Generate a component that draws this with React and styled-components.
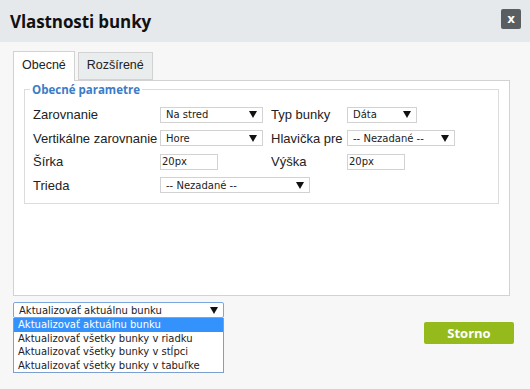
import React from 'react';
import styled, { createGlobalStyle } from 'styled-components';

const GlobalStyle = createGlobalStyle`
  html, body {
    margin: 0;
    padding: 0;
    background: #f7f7f7;
  }
  body {
    width: 530px;
    height: 389px;
    overflow: hidden;
    font-family: "Liberation Sans", Arial, sans-serif;
  }
`;

const Dialog = styled.div`
  width: 530px;
  height: 389px;
  display: flex;
  flex-direction: column;
  background: #f7f7f7;
`;

const Header = styled.div`
  height: 42px;
  flex: none;
  display: flex;
  align-items: center;
  justify-content: space-between;
  padding: 0 9px 0 10px;
  background: #e6e9ec;
  box-sizing: border-box;
`;

const Title = styled.h1`
  margin: 0;
  font-family: "Open Sans", sans-serif;
  font-weight: 700;
  font-size: 17px;
  color: #111;
  letter-spacing: -0.1px;
`;

const CloseButton = styled.button`
  width: 20px;
  height: 20px;
  margin-top: -4px;
  padding: 0;
  border: none;
  border-radius: 2px;
  background: #595e63;
  color: #fff;
  font-family: "DejaVu Sans", sans-serif;
  font-weight: 700;
  font-size: 12px;
  line-height: 20px;
`;

const Body = styled.div`
  padding: 9px 15px 0 13px;
  margin-right: 5px;
`;

const Tabs = styled.div`
  display: flex;
  align-items: flex-end;
  gap: 3px;
`;

const Tab = styled.div`
  box-sizing: border-box;
  height: ${p => (p.$active ? '30px' : '28px')};
  margin-bottom: ${p => (p.$active ? '-1px' : '0')};
  padding: 0 8px;
  border: 1px solid #d2d2d2;
  border-bottom: ${p => (p.$active ? 'none' : '1px solid #d2d2d2')};
  background: ${p => (p.$active ? '#fff' : '#eaedee')};
  font-size: 12.5px;
  line-height: ${p => (p.$active ? '27px' : '25px')};
  color: #222;
  position: relative;
  z-index: ${p => (p.$active ? 1 : 0)};
`;

const Panel = styled.div`
  box-sizing: border-box;
  height: 216px;
  background: #fff;
  border: 1px solid #d2d2d2;
  padding: 1px 10px 0 10px;
`;

const Fieldset = styled.fieldset`
  margin: 0;
  padding: 6px 8px 6px 8px;
  border: 1px solid #dcdcdc;
`;

const Legend = styled.legend`
  padding: 0 2px;
  margin-left: -3px;
  font-family: "Open Sans", sans-serif;
  font-weight: 700;
  font-size: 11.5px;
  color: #3b7bc8;
`;

const FormGrid = styled.div`
  display: grid;
  grid-template-columns: 127px 111px 76px 1fr;
  grid-auto-rows: 23.5px;
  align-items: center;
`;

const Label = styled.span`
  font-size: 13px;
  color: #222;
  white-space: nowrap;
`;

const Control = styled.div`
  box-sizing: border-box;
  width: ${p => p.$width}px;
  height: 16px;
  display: flex;
  align-items: center;
  justify-content: space-between;
  padding: 0 5px 0 ${p => (p.$input ? 1 : 5)}px;
  border: 1px solid ${p => (p.$focus ? '#7ba7df' : '#d2d2d2')};
  border-radius: ${p => (p.$focus ? '2px' : '0')};
  background: #fff;
  font-family: "DejaVu Sans", Verdana, sans-serif;
  font-size: 10px;
  color: #222;
  white-space: nowrap;
`;

const Arrow = () => (
  <svg width="8" height="7" viewBox="0 0 8 7">
    <path d="M0 0 H8 L4 7 Z" fill="#111" />
  </svg>
);

const Select = ({ width, value, focus }) => (
  <Control $width={width} $focus={focus}>
    <span>{value}</span>
    <Arrow />
  </Control>
);

const Input = ({ width, value }) => (
  <Control $width={width} $input>
    <span>{value}</span>
  </Control>
);

const Footer = styled.div`
  display: flex;
  justify-content: space-between;
  align-items: flex-start;
  padding: 6px 16px 0 13px;
`;

const Picker = styled.div`
  display: flex;
  flex-direction: column;
  width: 211px;
`;

const OptionList = styled.ul`
  list-style: none;
  margin: 0;
  padding: 0;
  border: 1px solid #7b9fd0;
  border-top: none;
  background: #fff;
`;

const Option = styled.li`
  height: 13.5px;
  line-height: 13.5px;
  padding-left: 4px;
  font-family: "DejaVu Sans", Verdana, sans-serif;
  font-size: 10px;
  background: ${p => (p.$selected ? '#3492fd' : '#fff')};
  color: ${p => (p.$selected ? '#fff' : '#222')};
  white-space: nowrap;
`;

const PrimaryButton = styled.button`
  margin-top: 20px;
  width: 90px;
  height: 22px;
  border: none;
  border-radius: 2px;
  background: #94ba1c;
  color: #fff;
  font-family: "Open Sans", sans-serif;
  font-weight: 700;
  font-size: 13px;
  padding: 0;
`;

const options = [
  'Aktualizovať aktuálnu bunku',
  'Aktualizovať všetky bunky v riadku',
  'Aktualizovať všetky bunky v stĺpci',
  'Aktualizovať všetky bunky v tabuľke',
];

export default function App() {
  return (
    <>
      <GlobalStyle />
      <Dialog>
        <Header>
          <Title>Vlastnosti bunky</Title>
          <CloseButton>x</CloseButton>
        </Header>
        <Body>
          <Tabs>
            <Tab $active>Obecné</Tab>
            <Tab>Rozšírené</Tab>
          </Tabs>
          <Panel>
            <Fieldset>
              <Legend>Obecné parametre</Legend>
              <FormGrid>
                <Label>Zarovnanie</Label>
                <Select width={103} value="Na stred" />
                <Label>Typ bunky</Label>
                <Select width={70} value="Dáta" />

                <Label>Vertikálne zarovnanie</Label>
                <Select width={103} value="Hore" />
                <Label>Hlavička pre</Label>
                <Select width={108} value="-- Nezadané --" />

                <Label>Šírka</Label>
                <Input width={58} value="20px" />
                <Label>Výška</Label>
                <Input width={58} value="20px" />

                <Label>Trieda</Label>
                <Select width={150} value="-- Nezadané --" />
              </FormGrid>
            </Fieldset>
          </Panel>
        </Body>
        <Footer>
          <Picker>
            <Select width={211} value={options[0]} focus />
            <OptionList>
              {options.map((o, i) => (
                <Option key={o} $selected={i === 0}>{o}</Option>
              ))}
            </OptionList>
          </Picker>
          <PrimaryButton>Storno</PrimaryButton>
        </Footer>
      </Dialog>
    </>
  );
}
